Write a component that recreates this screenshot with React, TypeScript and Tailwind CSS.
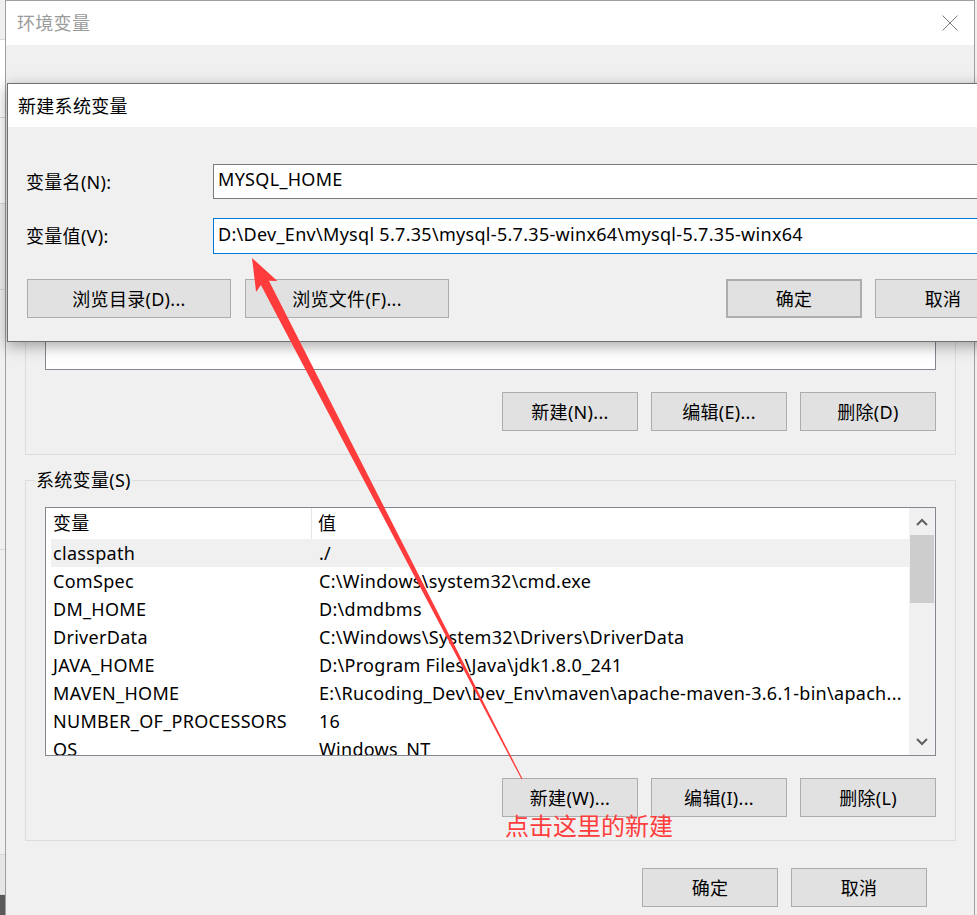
import React from 'react'

const rows = [
  { name: 'classpath', value: './' },
  { name: 'ComSpec', value: 'C:\\Windows\\system32\\cmd.exe' },
  { name: 'DM_HOME', value: 'D:\\dmdbms' },
  { name: 'DriverData', value: 'C:\\Windows\\System32\\Drivers\\DriverData' },
  { name: 'JAVA_HOME', value: 'D:\\Program Files\\Java\\jdk1.8.0_241' },
  { name: 'MAVEN_HOME', value: 'E:\\Rucoding_Dev\\Dev_Env\\maven\\apache-maven-3.6.1-bin\\apach...' },
  { name: 'NUMBER_OF_PROCESSORS', value: '16' },
  { name: 'OS', value: 'Windows_NT' },
]

function WinButton({ label, className = '' }: { label: string; className?: string }) {
  return (
    <div
      className={`flex h-[39px] shrink-0 items-center justify-center border border-[#adadad] bg-[#e1e1e1] text-[18px] leading-none ${className}`}
    >
      {label}
    </div>
  )
}

function Chevron({ up }: { up: boolean }) {
  return (
    <svg width="12" height="8" viewBox="0 0 12 8">
      <path
        d={up ? 'M1 7 L6 2 L11 7' : 'M1 1 L6 6 L11 1'}
        fill="none"
        stroke="#606060"
        strokeWidth="2"
      />
    </svg>
  )
}

export default function App() {
  return (
    <div className="relative h-[915px] w-[977px] overflow-hidden bg-[#f0f0f0] font-['Noto_Sans','Noto_Sans_CJK_SC',sans-serif] tracking-[0.3px] text-black">
      <div className="flex h-full">
        {/* window behind, only its edge shows */}
        <div className="flex w-[5px] shrink-0 flex-col bg-[#f0f0f0]">
          <div className="h-[40px] border-b border-[#d9d9d9]" />
          <div className="h-[78px] border-b border-[#d9d9d9] bg-white" />
          <div className="h-[86px] border-b border-[#d9d9d9] bg-white" />
          <div className="h-[86px] border-b border-[#d9d9d9]" />
          <div className="h-[260px] border-b border-[#d9d9d9]" />
          <div className="h-[305px] border-b border-[#d9d9d9]" />
          <div className="h-[40px] border-b border-[#d9d9d9] bg-[#e6e6e6]" />
          <div className="flex-1 bg-[#5a5a5a]" />
        </div>

        {/* 环境变量 */}
        <div className="flex w-[970px] shrink-0 flex-col border-x border-t border-[#a0a0a0]">
          <div className="flex h-[44px] items-center justify-between bg-white pl-[11px] pr-[16px]">
            <span className="text-[18px] leading-none text-[#9b9b9b]">环境变量</span>
            <svg width="16" height="16" viewBox="0 0 16 16">
              <path d="M0.5 0.5 L15.5 15.5 M15.5 0.5 L0.5 15.5" stroke="#7a7a7a" strokeWidth="1" />
            </svg>
          </div>

          <div className="flex flex-1 flex-col pl-[19px] pr-[18px]">
            {/* user variables */}
            <div className="mt-[50px] flex flex-col border border-[#dcdcdc] px-[19px] pb-[23px] pt-[14px]">
              <div className="h-[260px] border border-[#828790] bg-white" />
              <div className="mt-[22px] flex justify-end gap-[13px]">
                <WinButton label="新建(N)..." className="w-[136px]" />
                <WinButton label="编辑(E)..." className="w-[136px]" />
                <WinButton label="删除(D)" className="w-[136px]" />
              </div>
            </div>

            {/* system variables */}
            <div className="relative mt-[25px] flex flex-col border border-[#dcdcdc] px-[19px] pb-[23px] pt-[26px]">
              <span className="absolute left-[9px] top-[-13px] bg-[#f0f0f0] px-[1px] text-[18px] leading-[24px]">
                系统变量(S)
              </span>
              <div className="flex h-[249px] overflow-hidden border border-[#828790] bg-white">
                <div className="flex flex-1 flex-col overflow-hidden">
                  <div className="flex h-[31px] shrink-0 items-center text-[18px]">
                    <div className="flex h-full w-[266px] shrink-0 items-center border-r border-[#e5e5e5] pl-[7px]">变量</div>
                    <div className="pl-[6px]">值</div>
                  </div>
                  <div className="flex flex-col pl-[5px]">
                    {rows.map((r, i) => (
                      <div
                        key={r.name}
                        className={`flex h-[28px] shrink-0 items-center text-[18px] leading-none ${i === 0 ? 'bg-[#f0f0f0]' : ''}`}
                      >
                        <div className="w-[261px] shrink-0 whitespace-nowrap pl-[2px]">{r.name}</div>
                        <div className="whitespace-nowrap pl-[7px]">{r.value}</div>
                      </div>
                    ))}
                  </div>
                </div>
                <div className="flex w-[26px] shrink-0 flex-col bg-[#f0f0f0]">
                  <div className="flex h-[27px] items-center justify-center">
                    <Chevron up />
                  </div>
                  <div className="mx-[1px] h-[68px] bg-[#cdcdcd]" />
                  <div className="flex-1" />
                  <div className="flex h-[27px] items-center justify-center">
                    <Chevron up={false} />
                  </div>
                </div>
              </div>
              <div className="mt-[22px] flex justify-end gap-[13px]">
                <WinButton label="新建(W)..." className="w-[136px]" />
                <WinButton label="编辑(I)..." className="w-[136px]" />
                <WinButton label="删除(L)" className="w-[136px]" />
              </div>
            </div>

            <div className="mt-[27px] flex justify-end gap-[13px] pr-[29px]">
              <WinButton label="确定" className="w-[136px]" />
              <WinButton label="取消" className="w-[136px]" />
            </div>
          </div>
        </div>
      </div>

      {/* 新建系统变量 dialog */}
      <div className="absolute left-[7px] top-[83px] flex h-[259px] w-[1000px] flex-col border border-[#707070] bg-[#f0f0f0] shadow-[0_4px_14px_rgba(0,0,0,0.35)]">
        <div className="flex h-[43px] items-center bg-white pl-[10px] text-[18px] leading-none">新建系统变量</div>
        <div className="flex flex-col pl-[18px] pt-[37px]">
          <div className="flex items-center">
            <div className="w-[187px] shrink-0 text-[18px] leading-none">变量名(N):</div>
            <div className="flex h-[35px] flex-1 items-center border border-[#7a7a7a] bg-white pb-[5px] pl-[4px] text-[18px] leading-none">
              MYSQL_HOME
            </div>
          </div>
          <div className="mt-[19px] flex items-center">
            <div className="w-[187px] shrink-0 text-[18px] leading-none">变量值(V):</div>
            <div className="flex h-[36px] flex-1 items-center whitespace-nowrap border border-[#0078d7] bg-white pb-[5px] pl-[4px] text-[18px] leading-none">
              D:\Dev_Env\Mysql 5.7.35\mysql-5.7.35-winx64\mysql-5.7.35-winx64
            </div>
          </div>
          <div className="mt-[25px] flex pl-[1px]">
            <WinButton label="浏览目录(D)..." className="w-[204px]" />
            <WinButton label="浏览文件(F)..." className="ml-[14px] w-[204px]" />
            <WinButton label="确定" className="ml-[277px] w-[136px] border-2 border-[#0078d7]" />
            <WinButton label="取消" className="ml-[13px] w-[136px]" />
          </div>
        </div>
      </div>

      {/* annotation arrow */}
      <svg className="pointer-events-none absolute left-0 top-0" width="977" height="915" viewBox="0 0 977 915">
        <polygon
          points="252,258 277.4,280.9 268.9,280.8 522.5,778.7 521.5,779.3 260.9,285 256.1,291.9"
          fill="#ff3b3b"
        />
      </svg>
      <span className="absolute left-[505px] top-[811px] text-[24px] leading-[30px] tracking-normal text-[#ff3d3d]">点击这里的新建</span>
    </div>
  )
}
